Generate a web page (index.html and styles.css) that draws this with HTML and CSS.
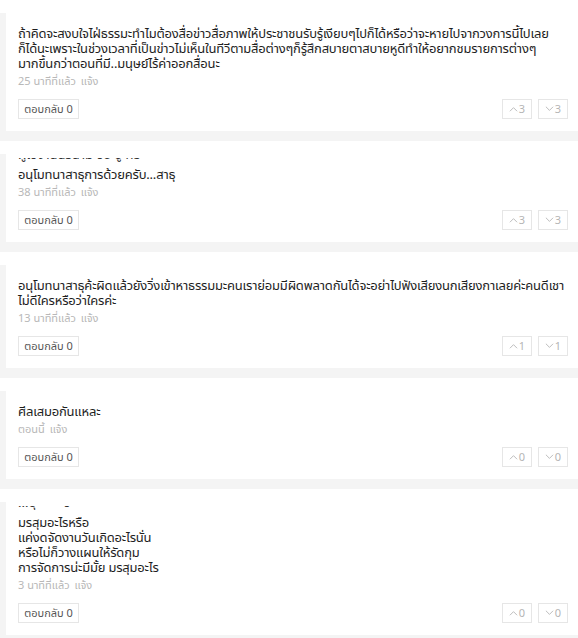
FILE: index.html
```html
<!DOCTYPE html>
<html lang="th">
<head>
<meta charset="utf-8">
<link rel="stylesheet" href="styles.css">
</head>
<body>
<div class="list">
  <div class="card">
    <div class="head"><span class="name"><span class="name-in"></span></span></div>
    <p class="text">ถ้าคิดจะสงบใจไฝ่ธรรมะทำไมต้องสื่อข่าวสื่อภาพให้ประชาชนรับรู้เงียบๆไปก็ได้หรือว่าจะหายไปจากวงการนี้ไปเลย<br>ก็ได้นะเพราะในช่วงเวลาที่เป็นข่าวไม่เห็นในทีวีตามสื่อต่างๆก็รู้สึกสบายตาสบายหูดีทำให้อยากชมรายการต่างๆ<br>มากขึ้นกว่าตอนที่มี..มนุษย์ไร้ค่าออกสื่อนะ</p>
    <div class="meta">25 นาทีที่แล้ว <span class="report">แจ้ง</span></div>
    <div class="actions">
      <button class="reply">ตอบกลับ 0</button>
      <div class="votes">
        <button class="vote"><svg viewBox="0 0 10 6" class="chev"><polyline points="1,5.5 5,1.5 9,5.5"/></svg>3</button>
        <button class="vote"><svg viewBox="0 0 10 6" class="chev"><polyline points="1,0.5 5,4.5 9,0.5"/></svg>3</button>
      </div>
    </div>
  </div>

  <div class="card">
    <div class="head"><span class="name"><span class="name-in">ผู้ใช้งานนิรนาม ชื่อ ปู่ ศรี</span></span></div>
    <p class="text">อนุโมทนาสาธุการด้วยครับ...สาธุ</p>
    <div class="meta">38 นาทีที่แล้ว <span class="report">แจ้ง</span></div>
    <div class="actions">
      <button class="reply">ตอบกลับ 0</button>
      <div class="votes">
        <button class="vote"><svg viewBox="0 0 10 6" class="chev"><polyline points="1,5.5 5,1.5 9,5.5"/></svg>3</button>
        <button class="vote"><svg viewBox="0 0 10 6" class="chev"><polyline points="1,0.5 5,4.5 9,0.5"/></svg>3</button>
      </div>
    </div>
  </div>

  <div class="card">
    <div class="head"><span class="name"><span class="name-in"></span></span></div>
    <p class="text">อนุโมทนาสาธุค้ะผิดแล้วยังวิ่งเข้าหาธรรมมะคนเราย่อมมีผิดพลาดกันได้จะอย่าไปฟังเสียงนกเสียงกาเลยค่ะคนดีเชา<br>ไม่ดีใครหรือว่าใครค่ะ</p>
    <div class="meta">13 นาทีที่แล้ว <span class="report">แจ้ง</span></div>
    <div class="actions">
      <button class="reply">ตอบกลับ 0</button>
      <div class="votes">
        <button class="vote"><svg viewBox="0 0 10 6" class="chev"><polyline points="1,5.5 5,1.5 9,5.5"/></svg>1</button>
        <button class="vote"><svg viewBox="0 0 10 6" class="chev"><polyline points="1,0.5 5,4.5 9,0.5"/></svg>1</button>
      </div>
    </div>
  </div>

  <div class="card">
    <div class="head"><span class="name"><span class="name-in"></span></span></div>
    <p class="text">ศีลเสมอกันแหละ</p>
    <div class="meta">ตอนนี้ <span class="report">แจ้ง</span></div>
    <div class="actions">
      <button class="reply">ตอบกลับ 0</button>
      <div class="votes">
        <button class="vote"><svg viewBox="0 0 10 6" class="chev"><polyline points="1,5.5 5,1.5 9,5.5"/></svg>0</button>
        <button class="vote"><svg viewBox="0 0 10 6" class="chev"><polyline points="1,0.5 5,4.5 9,0.5"/></svg>0</button>
      </div>
    </div>
  </div>

  <div class="card">
    <div class="head"><span class="name"><span class="name-in">...ปุ        ช์</span></span></div>
    <p class="text">มรสุมอะไรหรือ<br>แค่งดจัดงานวันเกิดอะไรนั่น<br>หรือไม่ก็วางแผนให้รัดกุม<br>การจัดการน่ะมีมั้ย มรสุมอะไร</p>
    <div class="meta">3 นาทีที่แล้ว <span class="report">แจ้ง</span></div>
    <div class="actions">
      <button class="reply">ตอบกลับ 0</button>
      <div class="votes">
        <button class="vote"><svg viewBox="0 0 10 6" class="chev"><polyline points="1,5.5 5,1.5 9,5.5"/></svg>0</button>
        <button class="vote"><svg viewBox="0 0 10 6" class="chev"><polyline points="1,0.5 5,4.5 9,0.5"/></svg>0</button>
      </div>
    </div>
  </div>
</div>
</body>
</html>
```

FILE: styles.css
```css
html, body {
  margin: 0;
  padding: 0;
  background: #f4f4f4;
}
body {
  font-family: "Noto Sans Thai", "Noto Sans", "DejaVu Sans", sans-serif;
  color: #1e1e1e;
}
.list {
  display: flex;
  flex-direction: column;
  gap: 10px;
}
.card {
  position: relative;
  margin-left: 6px;
  background: #fff;
  padding: 0 8px 12px 12px;
}
.head {
  height: 27px;
  box-sizing: border-box;
  padding-top: 17px;
}
.head::before {
  content: "";
  position: absolute;
  top: 0;
  left: -6px;
  width: 90px;
  height: 13px;
  background: #fff;
  z-index: 1;
}
.name {
  display: block;
  height: 5px;
  overflow: hidden;
}
.name-in {
  display: block;
  margin-top: -10px;
  font-size: 13px;
  line-height: 15px;
  color: #333;
  white-space: pre;
}
.text {
  margin: 0;
  font-size: 13px;
  line-height: 15px;
  letter-spacing: -0.2px;
  white-space: nowrap;
  color: #1e1e1e;
}
.meta {
  margin-top: 3px;
  font-size: 11px;
  line-height: 14px;
  color: #b8b8b8;
}
.report {
  margin-left: 2px;
}
.actions {
  margin-top: 10px;
  margin-right: 2px;
  display: flex;
  justify-content: space-between;
  align-items: center;
}
button {
  font-family: inherit;
  background: #fff;
  border: 1px solid #e6e6e6;
  margin: 0;
  cursor: pointer;
}
.reply {
  height: 20px;
  width: 61px;
  padding: 0;
  font-size: 11px;
  color: #555;
}
.votes {
  display: flex;
  gap: 6px;
}
.vote {
  height: 20px;
  width: 30px;
  padding: 0;
  font-size: 11px;
  color: #b5b5b5;
  display: flex;
  align-items: center;
  justify-content: center;
  gap: 1px;
}
.chev {
  width: 9px;
  height: 6px;
  fill: none;
  stroke: #b5b5b5;
  stroke-width: 1;
}
```
